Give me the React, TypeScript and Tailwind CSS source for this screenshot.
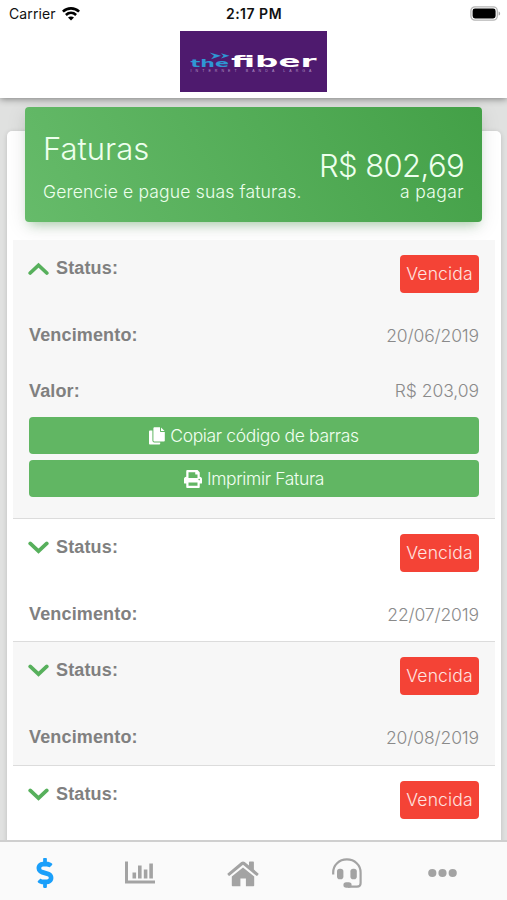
import { FaDollarSign, FaPrint } from 'react-icons/fa';

interface Invoice {
  id: number;
  dueDate?: string;
  amount?: string;
  open?: boolean;
  rowClass: string;
}

const INVOICES: Invoice[] = [
  { id: 1, dueDate: '20/06/2019', amount: 'R$ 203,09', open: true, rowClass: 'h-[279px] bg-[#f7f7f7]' },
  { id: 2, dueDate: '22/07/2019', rowClass: 'h-[123px] bg-white' },
  { id: 3, dueDate: '20/08/2019', rowClass: 'h-[124px] bg-[#f7f7f7]' },
  { id: 4, rowClass: 'h-[124px] bg-white' },
];

function WifiIcon() {
  return (
    <svg className="w-[18px] h-[14px]" viewBox="0 0 18 14" fill="none" stroke="#000" strokeWidth="2.6">
      <path d="M0.9 4.7C5.4 0.2 12.6 0.2 17.1 4.7" />
      <path d="M3.9 8C6.9 5.2 11.1 5.2 14.1 8" />
      <path d="M9 13.6L6 10.5C7.6 9 10.4 9 12 10.5Z" fill="#000" stroke="none" />
    </svg>
  );
}

function BatteryIcon() {
  return (
    <svg className="w-[31px] h-[15px]" viewBox="0 0 31 15">
      <rect x="0.9" y="0.9" width="26.4" height="13.2" rx="4" fill="#fff" stroke="#b5b5b5" strokeWidth="1.3" />
      <rect x="2.6" y="2.6" width="23" height="9.8" rx="2.4" fill="#000" />
      <path d="M28.6 5.4C30.6 6 30.6 9 28.6 9.6Z" fill="#a5a5a5" />
    </svg>
  );
}

function Logo() {
  return (
    <svg className="w-[147px] h-[61px]" viewBox="0 0 147 61">
      <rect width="147" height="61" fill="#4e1a6e" />
      <g fontFamily="'DejaVu Sans', sans-serif" fontWeight="700">
        <text x="10.5" y="35.5" fontSize="11" fill="#2f96d3" textLength="38.5" lengthAdjust="spacingAndGlyphs">the</text>
        <text x="51" y="35.8" fontSize="16.5" fill="#fff" textLength="85.5" lengthAdjust="spacingAndGlyphs">fiber</text>
      </g>
      <path d="M29.5 21.5L41 24.8L31 28.2L34 24.8ZM41 22.2L49.5 24.8L41 27.4L43.5 24.8Z" fill="#2f96d3" />
      <text x="10.5" y="40.6" fontSize="3.6" fill="#b395c4" fontFamily="'Liberation Sans', sans-serif" textLength="121">
        INTERNET BANDA LARGA
      </text>
    </svg>
  );
}

function Chevron({ up }: { up?: boolean }) {
  return (
    <svg className="w-[21px] h-[14px]" viewBox="0 0 21 14" fill="none" stroke="#57b05c" strokeWidth="3.7" strokeLinecap="round">
      <path d={up ? 'M2.2 12L10.5 4.2L18.8 12' : 'M2.2 3.4L10.5 11.2L18.8 3.4'} />
    </svg>
  );
}

function CopyIcon() {
  return (
    <svg className="w-4 h-[18px]" viewBox="0 0 16 18" fill="#fff">
      <path d="M3.4 3.4H1.2C0.5 3.4 0 3.9 0 4.6V16.4C0 17.1 0.5 17.6 1.2 17.6H10C10.7 17.6 11.2 17.1 11.2 16.4V15.4H5.2C4.2 15.4 3.4 14.6 3.4 13.6Z" />
      <path d="M5.6 0.2H11V4C11 4.6 11.4 5 12 5H15.8V13.4C15.8 14.1 15.3 14.6 14.6 14.6H5.6C4.9 14.6 4.4 14.1 4.4 13.4V1.4C4.4 0.7 4.9 0.2 5.6 0.2Z" />
      <path d="M12 0.4L15.6 4H12Z" />
    </svg>
  );
}

function ChartIcon() {
  return (
    <svg className="w-[30px] h-[24px]" viewBox="0 0 30 24" fill="#a3a3a3">
      <path d="M0 0.5H3V19.5H30V22.5H0Z" />
      <rect x="7.5" y="11.5" width="3.6" height="6" />
      <rect x="13" y="4.5" width="3.6" height="13" />
      <rect x="18.8" y="8.5" width="3.6" height="9" />
      <rect x="24.3" y="2.5" width="3.6" height="15" />
    </svg>
  );
}

function HomeIcon() {
  return (
    <svg className="w-8 h-[27px]" viewBox="0 0 32 27" fill="#a3a3a3">
      <path d="M16 7.4L27.2 16.6V25.2C27.2 25.8 26.8 26.2 26.2 26.2H18.9V18.6H13.4V26.2H5.8C5.2 26.2 4.8 25.8 4.8 25.2V16.6Z" />
      <path d="M0.6 13.4L14.3 2C15.3 1.2 16.7 1.2 17.7 2L22 5.6V2.2C22 1.8 22.3 1.5 22.7 1.5H26.2C26.6 1.5 26.9 1.8 26.9 2.2V9.6L31.4 13.4C31.7 13.7 31.7 14 31.5 14.3L30.3 15.7C30 16 29.7 16 29.4 15.8L16 4.8L2.6 15.8C2.3 16 2 16 1.7 15.7L0.5 14.3C0.3 14 0.3 13.7 0.6 13.4Z" />
    </svg>
  );
}

function SupportIcon() {
  return (
    <svg className="w-[30px] h-[30px]" viewBox="0 0 30 30" fill="none" stroke="#a3a3a3" strokeWidth="2.2">
      <path d="M1.2 16.5V14.4C1.2 7.2 7 1.4 14.9 1.4C22.8 1.4 28.6 7.2 28.6 14.4V25C28.6 27.3 27.4 28.6 25 28.6H16" />
      <rect x="5" y="10.8" width="6.4" height="10.4" rx="2.8" fill="#a3a3a3" stroke="none" />
      <rect x="18.4" y="10.8" width="6.4" height="10.4" rx="2.8" fill="#a3a3a3" stroke="none" />
      <rect x="11.4" y="24.2" width="8.2" height="5.6" rx="2.8" fill="#a3a3a3" stroke="none" />
    </svg>
  );
}

function InvoiceRow({ invoice }: { invoice: Invoice }) {
  return (
    <div className={`${invoice.rowClass} shrink-0 border-b border-[#dcdcdc] px-4 pt-[15px]`}>
      <div className="flex items-start justify-between">
        <div className="flex items-center h-[26px] -ml-px">
          <Chevron up={invoice.open} />
          <span className="ml-[7px] text-lg leading-6 tracking-[0.15px] font-bold text-[#808080]">Status:</span>
        </div>
        <span className="flex items-center justify-center w-[79px] h-[38px] pt-px rounded-[4px] bg-[#f44336] font-['Inter'] font-light text-[17.5px] tracking-[0.15px] text-[#ffe3e0]">
          Vencida
        </span>
      </div>
      {invoice.dueDate && (
        <div className="mt-[30px] flex justify-between leading-[25px]">
          <span className="text-lg leading-[25px] tracking-[0.15px] font-bold text-[#808080]">Vencimento:</span>
          <span className="font-['Inter'] font-light text-[17.5px] tracking-[-0.12px] text-[#8a8a8a]">{invoice.dueDate}</span>
        </div>
      )}
      {invoice.open && (
        <>
          <div className="mt-[31px] flex justify-between leading-6">
            <span className="text-lg leading-6 tracking-[0.15px] font-bold text-[#808080]">Valor:</span>
            <span className="font-['Inter'] font-light text-[17.5px] tracking-[-0.05px] text-[#8a8a8a]">{invoice.amount}</span>
          </div>
          <div className="mt-[14px] flex flex-col gap-1.5 font-['Inter'] font-light text-[17.5px] tracking-[-0.35px] text-[#f1fff1]">
            <button className="flex h-[37px] items-center justify-center gap-[5px] pt-px rounded-[4px] bg-[#61b663]">
              <CopyIcon />
              Copiar código de barras
            </button>
            <button className="flex h-[37px] items-center justify-center gap-[5px] pt-px rounded-[4px] bg-[#61b663]">
              <FaPrint className="w-[18px] h-[18px] text-white" />
              Imprimir Fatura
            </button>
          </div>
        </>
      )}
    </div>
  );
}

export default function App() {
  return (
    <div className="flex flex-col w-[507px] h-[900px] overflow-hidden bg-[#e0e1e0] font-['Liberation_Sans',sans-serif]">
      <header className="z-10 h-[98px] shrink-0 bg-white shadow-[0_1px_7px_rgba(0,0,0,0.45)]">
        <div className="grid grid-cols-[1fr_80px_1fr] items-center h-[27px] pl-[9px] pr-[6px] font-['Inter'] text-[14px] text-[#111]">
          <div className="flex items-center gap-[6px]">
            <span className="tracking-[0.1px]">Carrier</span>
            <WifiIcon />
          </div>
          <span className="-ml-[2px] text-center text-[14px] tracking-[0.5px] font-semibold">2:17 PM</span>
          <div className="flex justify-end">
            <BatteryIcon />
          </div>
        </div>
        <div className="mt-1 flex justify-center">
          <Logo />
        </div>
      </header>

      <main className="flex-1 min-h-0 px-[7px] pt-[33px]">
        <section className="flex flex-col h-[720px] w-[494px] rounded-[5px] bg-white shadow-[0_1px_5px_rgba(0,0,0,0.16)]">
          <div className="-mt-6 ml-[18px] mr-[19px] h-[115px] shrink-0 flex justify-between rounded-[4px] bg-linear-60 from-[#66bb6a] to-[#43a047] px-[18px] font-['Inter'] font-light text-[#edffed] shadow-[0_5px_20px_rgba(0,0,0,0.1),0_7px_10px_-5px_rgba(76,175,80,0.4)]">
            <div className="pt-[22px]">
              <h1 className="text-[31px] leading-10">Faturas</h1>
              <p className="mt-[11px] text-[17.5px] leading-6 tracking-[0.17px]">Gerencie e pague suas faturas.</p>
            </div>
            <div className="pt-[41px] text-right">
              <div className="text-[31px] leading-9 tracking-[-0.6px]">R$ 802,69</div>
              <div className="-mt-1 text-[17.5px] leading-6 tracking-[0.4px]">a pagar</div>
            </div>
          </div>
          <div className="mt-[18px] mx-[6px] flex flex-col overflow-hidden">
            {INVOICES.map((invoice) => (
              <InvoiceRow key={invoice.id} invoice={invoice} />
            ))}
          </div>
        </section>
      </main>

      <nav className="z-10 flex h-[60px] shrink-0 items-center border-t-2 border-[#cfcfcf] bg-[#fafafa] pl-[30px] pt-1">
        <FaDollarSign className="w-[30px] h-[30px] text-[#1a9ffa]" />
        <div className="ml-[65px]">
          <ChartIcon />
        </div>
        <div className="ml-[72px]">
          <HomeIcon />
        </div>
        <div className="ml-[73px]">
          <SupportIcon />
        </div>
        <svg className="ml-[66px] w-[29px] h-[10px]" viewBox="0 0 29 10" fill="#a3a3a3">
          <circle cx="4.3" cy="5" r="4.1" />
          <circle cx="14.5" cy="5" r="4.1" />
          <circle cx="24.7" cy="5" r="4.1" />
        </svg>
      </nav>
    </div>
  );
}
